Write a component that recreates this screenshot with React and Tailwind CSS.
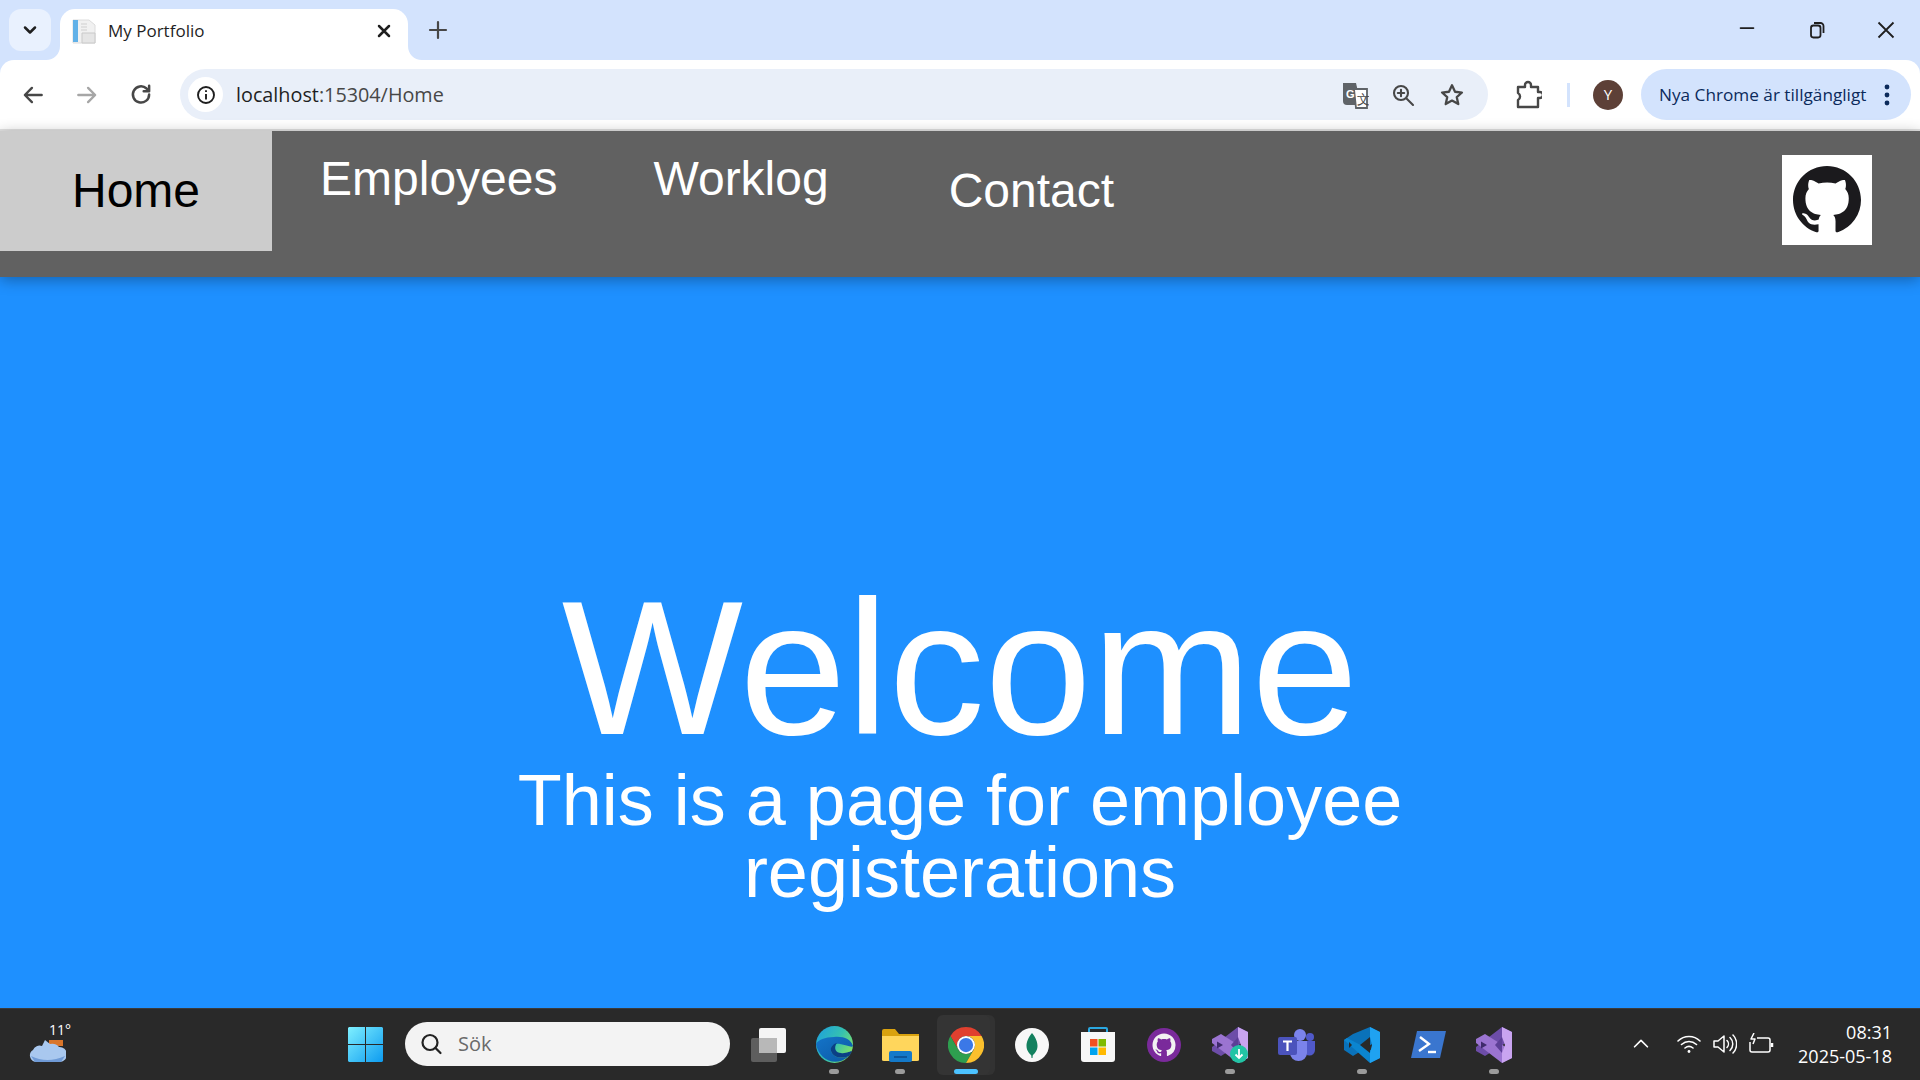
import React from "react";

const UI = { fontFamily: '"Open Sans", "Noto Sans", sans-serif' };
const gh = "M8 0C3.58 0 0 3.58 0 8c0 3.54 2.29 6.53 5.47 7.59.4.07.55-.17.55-.38 0-.19-.01-.82-.01-1.49-2.01.37-2.53-.49-2.69-.94-.09-.23-.48-.94-.82-1.13-.28-.15-.68-.52-.01-.53.63-.01 1.08.58 1.23.82.72 1.21 1.87.87 2.33.66.07-.52.28-.87.51-1.07-1.78-.2-3.64-.89-3.64-3.95 0-.87.31-1.59.82-2.15-.08-.2-.36-1.02.08-2.12 0 0 .67-.21 2.2.82.64-.18 1.32-.27 2-.27.68 0 1.36.09 2 .27 1.53-1.04 2.2-.82 2.2-.82.44 1.1.16 1.92.08 2.12.51.56.82 1.27.82 2.15 0 3.07-1.87 3.75-3.65 3.95.29.25.54.73.54 1.48 0 1.07-.01 1.93-.01 2.2 0 .21.15.46.55.38A8.013 8.013 0 0016 8c0-4.42-3.58-8-8-8z";

function Stroke({ size = 24, color = "#474747", sw = 2, children, className = "" }) {
  return (
    <svg width={size} height={size} viewBox="0 0 24 24" fill="none" stroke={color} strokeWidth={sw} strokeLinecap="round" strokeLinejoin="round" className={className}>
      {children}
    </svg>
  );
}

function VSIcon() {
  return (
    <svg width="36" height="36" viewBox="0 0 36 36">
      <path d="M26 0L36 5V12L9 29L0 24V20Z" fill="#6d4da8" />
      <path d="M0 12L9 7L36 24V31L26 36L0 16Z" fill="#9b74d1" />
      <path d="M5 14.5V21.5L11 18Z" fill="#3f2b6b" />
      <path d="M26 10L19 18L26 26Z" fill="#5c3f96" />
      <path d="M26 0L36 5V31L26 36V26L29 18L26 10Z" fill="#c9a4f0" />
    </svg>
  );
}

function Slot({ children, dot, active }) {
  return (
    <div className={"relative w-[66px] h-full flex items-center justify-center" + (active ? " z-0" : "")}>
      {active && <div className="absolute left-[4px] top-[6px] w-[53px] h-[60px] rounded-md bg-[#343434] shadow-[5px_0_0_#323232]" />}
      <div className="relative">{children}</div>
      {dot && <div className="absolute left-[28px] top-[60px] w-[10px] h-[5px] rounded-full bg-[#9b9b9b]" />}
      {active && <div className="absolute left-[21px] top-[60px] w-[24px] h-[5px] rounded-full bg-[#4cc2ff]" />}
    </div>
  );
}

function Browser() {
  return (
    <div className="bg-[#d3e3fd] shrink-0" style={UI}>
      <div className="h-[60px] flex items-start">
        <div className="ml-[9px] mt-[9px] w-[42px] h-[42px] rounded-xl bg-[#e9f1fe] flex items-center justify-center">
          <Stroke size={20} color="#1f1f1f" sw={3}><path d="M6 9l6 6 6-6" /></Stroke>
        </div>
        <div className="relative ml-[9px] mt-[9px] w-[348px] h-[51px] pb-[7px] bg-white rounded-t-[15px] flex items-center">
          <svg className="absolute left-[-14px] bottom-0" width="14" height="14" viewBox="0 0 14 14"><path d="M14 0V14H0C8 14 14 8 14 0Z" fill="#fff" /></svg>
          <svg className="absolute right-[-14px] bottom-0" width="14" height="14" viewBox="0 0 14 14"><path d="M0 0V14H14C6 14 0 8 0 0Z" fill="#fff" /></svg>
          <svg className="ml-[12px] shrink-0" width="24" height="25" viewBox="0 0 24 25">
            <path d="M1 1H17L23 6V24H1Z" fill="#f1f1f1" stroke="#dcdcdc" />
            <path d="M1 1H6V23H1Z" fill="#61b1e8" />
            <path d="M10 14H23V24H10Z" fill="#e5e5e5" stroke="#c9c9c9" />
            <path d="M9 5H15M9 8H15M9 11H15" stroke="#cfcfcf" />
          </svg>
          <span className="ml-[12px] text-[17px] text-[#1f1f1f] whitespace-nowrap">My Portfolio</span>
          <Stroke size={20} color="#1f1f1f" sw={3} className="ml-auto mr-[14px]"><path d="M6 6l12 12M18 6L6 18" /></Stroke>
        </div>
        <Stroke size={24} color="#474747" sw={2.2} className="ml-[18px] mt-[18px]"><path d="M12 4v16M4 12h16" /></Stroke>
        <Stroke size={22} color="#1f1f1f" sw={2} className="ml-[1286px] mt-[18px]"><path d="M5 11h14" /></Stroke>
        <svg className="ml-[50px] mt-[21px]" width="18" height="18" viewBox="0 0 18 18" fill="none" stroke="#1f1f1f" strokeWidth="1.8">
          <rect x="3" y="4.5" width="9.5" height="12" rx="2.4" />
          <path d="M6 2H12.5A3 3 0 0 1 15.5 5V12" />
        </svg>
        <svg className="ml-[50px] mt-[20px]" width="20" height="20" viewBox="0 0 20 20" fill="none" stroke="#1f1f1f" strokeWidth="1.8"><path d="M2.5 2.5l15 15M17.5 2.5l-15 15" /></svg>
      </div>
      <div className="h-[71px] bg-white rounded-t-[14px] border-b-2 border-[#e2e2e2] flex items-center">
        <Stroke size={26} sw={2.2} className="ml-[20px]"><path d="M20 12H5M11 5.5L4.5 12l6.5 6.5" /></Stroke>
        <Stroke size={26} color="#a6a6a6" sw={2.2} className="ml-[28px]"><path d="M4 12h15M13 5.5l6.5 6.5-6.5 6.5" /></Stroke>
        <Stroke size={26} sw={2.3} className="ml-[28px]"><path d="M19.5 11.5a7.5 7.5 0 1 1-2.4-5.5L19.5 8.5M19.5 3.5v5h-5" /></Stroke>
        <div className="ml-[26px] w-[1308px] h-[51px] rounded-full bg-[#e9eff9] flex items-center shrink-0">
          <div className="ml-[8px] w-[35px] h-[35px] rounded-full bg-white flex items-center justify-center">
            <svg width="20" height="20" viewBox="0 0 20 20" fill="none" stroke="#1f1f1f" strokeWidth="1.9"><circle cx="10" cy="10" r="8" /><path d="M10 9v5.5M10 5.2v1.9" /></svg>
          </div>
          <span className="ml-[13px] w-[212px] text-[19.8px] text-[#1f1f1f] whitespace-nowrap">localhost<span className="text-[#474747]">:15304/Home</span></span>
          <svg className="ml-[893px]" width="28" height="28" viewBox="0 0 28 28">
            <path d="M2 2H15L20 24H6Q2 24 2 20Z" fill="#5f6368" />
            <path d="M13 8H26V27H15Z" fill="#fff" stroke="#5f6368" strokeWidth="1.8" />
            <text x="5" y="17" fontSize="11" fontWeight="700" fill="#fff" fontFamily="Liberation Sans">G</text>
            <text x="16" y="23" fontSize="13" fill="#474747" fontFamily="Noto Sans">文</text>
          </svg>
          <svg className="ml-[22px]" width="24" height="24" viewBox="0 0 24 24" fill="none" stroke="#474747" strokeWidth="2.1" strokeLinecap="round"><circle cx="10" cy="10" r="7" /><path d="M15.5 15.5L22 22M10 6.8v6.4M6.8 10h6.4" /></svg>
          <Stroke size={26} sw={2.1} className="ml-[24px]"><path d="M12 3l2.8 6 6.4.7-4.8 4.3 1.4 6.4L12 17.1l-5.8 3.3 1.4-6.4-4.8-4.3 6.4-.7z" /></Stroke>
        </div>
        <svg className="ml-[28px]" width="26" height="30" viewBox="0 0 26 30" fill="none" stroke="#474747" strokeWidth="2.4" strokeLinejoin="round">
          <path d="M2 7H9V5A3 3 0 0 1 15 5V7H22V12H24A2.5 2.5 0 0 1 24 18H22V27H2V20A4 4 0 0 0 2 13Z" />
        </svg>
        <div className="ml-[25px] w-[3px] h-[24px] bg-[#d3e3fd]" />
        <div className="ml-[23px] w-[30px] h-[30px] rounded-full bg-[#5d4037] text-white text-[15px] flex items-center justify-center">Y</div>
        <div className="ml-[18px] w-[270px] h-[51px] rounded-full bg-[#d3e3fd] flex items-center shrink-0">
          <span className="ml-[18px] text-[17.2px] text-[#0b2a5b] whitespace-nowrap">Nya Chrome är tillgängligt</span>
          <svg className="ml-auto mr-[20px]" width="8" height="24" viewBox="0 0 8 24" fill="#0b2a5b"><circle cx="4" cy="4" r="2.4" /><circle cx="4" cy="12" r="2.4" /><circle cx="4" cy="20" r="2.4" /></svg>
        </div>
      </div>
    </div>
  );
}

function Nav() {
  const item = "block text-[48px] leading-[55px] whitespace-nowrap";
  return (
    <header className="relative z-10 h-[146px] shrink-0 bg-[#616161] flex items-start shadow-[0_3px_14px_rgba(0,0,0,0.32)]" style={{ fontFamily: '"Liberation Sans", Arial, sans-serif' }}>
      <a className={item + " h-[120px] px-[72px] py-[32px] bg-[#cccccc] text-black"}>Home</a>
      <a className={item + " px-[48px] pt-[20px] text-white"}>Employees</a>
      <a className={item + " px-[48px] pt-[20px] text-white"}>Worklog</a>
      <a className={item + " px-[72px] pt-[32px] text-white"}>Contact</a>
      <div className="ml-auto mr-[48px] mt-[24px] w-[90px] h-[90px] bg-white flex items-center justify-center">
        <svg width="68" height="68" viewBox="0 0 16 16" fill="#1b1a1d"><path d={gh} /></svg>
      </div>
    </header>
  );
}

function Hero() {
  return (
    <main className="flex-1 bg-[#1e90ff] flex flex-col items-center pt-[295px] text-white text-center" style={{ fontFamily: '"Liberation Sans", Arial, sans-serif' }}>
      <h1 className="text-[192px] leading-none font-normal">Welcome</h1>
      <p className="text-7xl w-[960px]">This is a page for employee registerations</p>
    </main>
  );
}

function Taskbar() {
  return (
    <footer className="h-[72px] shrink-0 bg-[#292929] border-t border-[#3a3a3a] flex items-start" style={UI}>
      <div className="ml-[29px] w-[40px] h-full relative">
        <span className="absolute left-[20px] top-[12px] text-white text-[14px] leading-[18px]">11°</span>
        <svg className="absolute left-0 top-[29px]" width="37" height="25" viewBox="0 0 37 25">
          <rect x="20" y="2" width="14" height="6" fill="#d9752b" />
          <path d="M7 24A6.5 6.5 0 0 1 4 12 7 7 0 0 1 13 8L16 2 21 6A9 9 0 0 1 30 9 7.5 7.5 0 0 1 31 24Z" fill="#a9c8ef" />
          <path d="M2 18Q18 26 36 18L32 24H6Z" fill="#6f9ad6" />
        </svg>
      </div>
      <svg className="ml-[279px] mt-[18px]" width="35" height="35" viewBox="0 0 35 35">
        <defs><linearGradient id="w" x1="0" y1="0" x2="1" y2="1"><stop offset="0" stopColor="#7ff0ff" /><stop offset="1" stopColor="#0d9bf0" /></linearGradient></defs>
        <path d="M1 0H17V17H0V1ZM18 0H34L35 1V17H18ZM0 18H17V35H1L0 34ZM18 18H35V34L34 35H18Z" fill="url(#w)" />
      </svg>
      <div className="ml-[22px] mt-[13px] w-[325px] h-[44px] rounded-full bg-[#f3f3f3] flex items-center shrink-0">
        <svg className="ml-[14px]" width="24" height="24" viewBox="0 0 24 24" fill="none" stroke="#222" strokeWidth="2.2" strokeLinecap="round"><circle cx="11" cy="10.5" r="7.5" /><path d="M16.5 16l5 5" /></svg>
        <span className="ml-[15px] text-[20px] text-[#6a6a6a]">Sök</span>
      </div>
      <div className="ml-[5px] flex h-full">
        <Slot>
          <svg width="36" height="34" viewBox="0 0 36 34">
            <rect x="1" y="10" width="26" height="24" rx="2" fill="#5e5e5e" />
            <rect x="9" y="0" width="27" height="25" rx="2" fill="#f5f5f5" />
            <rect x="9" y="10" width="18" height="15" fill="#b8b8b8" />
          </svg>
        </Slot>
        <Slot dot>
          <svg width="37" height="37" viewBox="0 0 37 37">
            <defs>
              <linearGradient id="e1" x1="0" y1="0" x2="1" y2="0.6"><stop offset="0" stopColor="#1b9de2" /><stop offset="0.6" stopColor="#35c1b0" /><stop offset="1" stopColor="#7ee06a" /></linearGradient>
              <linearGradient id="e2" x1="0" y1="0" x2="1" y2="1"><stop offset="0" stopColor="#1474c9" /><stop offset="1" stopColor="#0c59a4" /></linearGradient>
            </defs>
            <circle cx="18.5" cy="18.5" r="18.5" fill="url(#e1)" />
            <path d="M0 18C3 34 20 42 33 30 26 33 17 32 15 25 14 20 19 17 24 18 30 19 36 22 37 20 35 13 27 10 18 11 9 11 2 14 0 18Z" fill="url(#e2)" />
            <path d="M33 30C26 33 17 32 15 25 14 21 17 18 21 17 17 22 20 27 25 27 29 28 35 25 36 25 35 27 34 29 33 30Z" fill="#0b3f86" />
          </svg>
        </Slot>
        <Slot dot>
          <svg width="37" height="34" viewBox="0 0 37 34">
            <path d="M0 3Q0 1 2 1H13L17 6H37V32H0Z" fill="#d9a20f" />
            <path d="M0 8H37V32Q37 33 35 33H2Q0 33 0 32Z" fill="#ffd65c" />
            <rect x="7" y="23" width="23" height="11" rx="2" fill="#1479c9" />
            <path d="M12 29H25" stroke="#0b4b8a" strokeWidth="1.5" />
          </svg>
        </Slot>
        <Slot active>
          <svg width="36" height="36" viewBox="0 0 48 48">
            <path d="M24 0A24 24 0 0 1 44.8 12H24A12 12 0 0 0 13.6 30L3.2 12A24 24 0 0 1 24 0Z" fill="#e0402f" />
            <path d="M3.2 12A24 24 0 0 0 24 48L34.4 30A12 12 0 0 1 13.6 30Z" fill="#2e9e4f" />
            <path d="M44.8 12H24A12 12 0 0 1 34.4 30L24 48A24 24 0 0 0 44.8 12Z" fill="#fbc02d" />
            <circle cx="24" cy="24" r="12" fill="#fff" />
            <circle cx="24" cy="24" r="9.5" fill="#3b78e7" />
          </svg>
        </Slot>
        <Slot>
          <svg width="34" height="34" viewBox="0 0 34 34">
            <circle cx="17" cy="17" r="17" fill="#f7f7f7" />
            <path d="M17 5C13 10 11.5 14 11.5 18 11.5 23 15 26 16.3 27.5L16.5 30H17.5L17.7 27.5C19 26 22.5 23 22.5 18 22.5 14 21 10 17 5Z" fill="#13805e" />
          </svg>
        </Slot>
        <Slot>
          <svg width="36" height="36" viewBox="0 0 36 36">
            <path d="M9 6V2Q9 1 10 1H26Q27 1 27 2V6" fill="none" stroke="#2aa7e0" strokeWidth="2" />
            <path d="M1 5H35V32Q35 35 32 35H4Q1 35 1 32Z" fill="#f7f7f7" />
            <rect x="10" y="12" width="7.5" height="7.5" fill="#f25022" />
            <rect x="18.5" y="12" width="7.5" height="7.5" fill="#7fba00" />
            <rect x="10" y="20.5" width="7.5" height="7.5" fill="#00a4ef" />
            <rect x="18.5" y="20.5" width="7.5" height="7.5" fill="#ffb900" />
          </svg>
        </Slot>
        <Slot>
          <svg width="34" height="34" viewBox="0 0 34 34">
            <circle cx="17" cy="17" r="17" fill="#7a2a9b" />
            <g transform="translate(5.5 5.5) scale(1.44)"><path d={gh} fill="#f2f2f2" /></g>
          </svg>
        </Slot>
        <Slot dot>
          <div className="relative">
            <VSIcon />
            <div className="absolute left-[18px] top-[18px] w-[18px] h-[18px] rounded-full bg-[#22c4a5] flex items-center justify-center">
              <svg width="12" height="12" viewBox="0 0 12 12" fill="none" stroke="#fff" strokeWidth="1.8"><path d="M6 1v9M2.5 6.5L6 10l3.5-3.5" /></svg>
            </div>
          </div>
        </Slot>
        <Slot>
          <svg width="37" height="32" viewBox="0 0 37 32">
            <circle cx="22" cy="6" r="6" fill="#7b83eb" />
            <circle cx="32" cy="8" r="4" fill="#5059c9" />
            <path d="M26 12H37V21A5.5 5.5 0 0 1 26 21Z" fill="#5059c9" />
            <path d="M12 12H29V24A8.5 8 0 0 1 12 24Z" fill="#7b83eb" />
            <rect x="0" y="8" width="19" height="18" rx="2" fill="#4b53bc" />
            <path d="M5 12.5H14M9.5 12.5V22" stroke="#fff" strokeWidth="2.2" />
          </svg>
        </Slot>
        <Slot dot>
          <svg width="36" height="36" viewBox="0 0 36 36">
            <path d="M26 0L36 5V12L9 29 3 25 0 23V13L3 11 9 7Z" fill="#0a72ba" />
            <path d="M0 13L3 11L36 28V31L26 36Z" fill="#0b85d0" />
            <path d="M5 15V21L8 18Z" fill="#292929" />
            <path d="M26 10L16 18L26 26Z" fill="#292929" />
            <path d="M26 0L36 5V31L26 36V26L28 18 26 10Z" fill="#1fa2f1" />
          </svg>
        </Slot>
        <Slot>
          <svg width="35" height="27" viewBox="0 0 35 27">
            <path d="M6 0H35L29 27H0Z" fill="#3a76cf" />
            <path d="M9 6L18 13L8 20" fill="none" stroke="#fff" strokeWidth="2.4" />
            <path d="M17 21H25" stroke="#fff" strokeWidth="2.4" />
          </svg>
        </Slot>
        <Slot dot><VSIcon /></Slot>
      </div>
      <div className="ml-[103px] mt-[11px] h-[48px] flex items-center">
        <Stroke size={22} color="#fff" sw={1.8}><path d="M5 15l7-7 7 7" /></Stroke>
        <svg className="ml-[25px]" width="24" height="20" viewBox="0 0 24 20" fill="none" stroke="#fff" strokeWidth="1.6" strokeLinecap="round">
          <path d="M1 7C7 1 17 1 23 7M4.5 10.5C9 6.5 15 6.5 19.5 10.5M8 14C10.5 12 13.5 12 16 14" />
          <circle cx="12" cy="17.5" r="1.4" fill="#fff" stroke="none" />
        </svg>
        <svg className="ml-[12px]" width="24" height="22" viewBox="0 0 24 22" fill="none" stroke="#fff" strokeWidth="1.5" strokeLinejoin="round" strokeLinecap="round">
          <path d="M1 8V14H5L11 19V3L5 8Z" /><path d="M14 7.5A5 5 0 0 1 14 14.5M17 4.5A9 9 0 0 1 17 17.5M20 2A13 13 0 0 1 20 20" />
        </svg>
        <svg className="ml-[12px]" width="25" height="22" viewBox="0 0 25 22" fill="none" stroke="#fff" strokeWidth="1.5" strokeLinejoin="round">
          <path d="M8 5H19Q21 5 21 7V17Q21 19 19 19H3Q1 19 1 17V9" /><path d="M23 10V14" strokeWidth="2.5" /><path d="M5 0L2 6H6L4 11" />
        </svg>
        <div className="ml-[5px] w-[113px] text-right text-white text-[18px] leading-[24px] whitespace-nowrap">
          <div>08:31</div>
          <div>2025-05-18</div>
        </div>
      </div>
    </footer>
  );
}

export default function App() {
  return (
    <div className="w-[1920px] h-[1080px] flex flex-col overflow-hidden">
      <Browser />
      <Nav />
      <Hero />
      <Taskbar />
    </div>
  );
}
